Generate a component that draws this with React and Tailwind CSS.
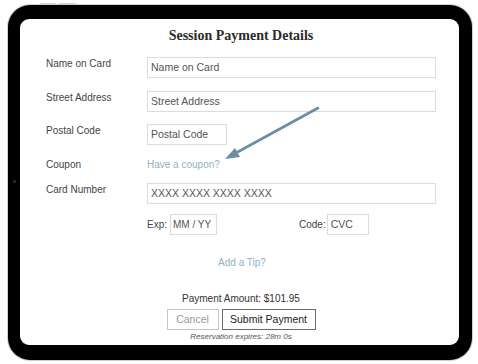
import React from 'react';

const sans = { fontFamily: '"Liberation Sans", Arial, sans-serif' };

function Field({ label, placeholder, width = 'flex-1', top = 'mt-[13px]' }) {
  return (
    <div className={`flex items-start ${top}`}>
      <div className="w-[101px] pt-[1px] text-[10px] leading-[12px] text-[#444]">{label}</div>
      <div className={`${width} h-[21px] border border-[#dcdcdc] px-[3px] flex items-center text-[10.5px] text-[#555] whitespace-nowrap`}>
        {placeholder}
      </div>
    </div>
  );
}

export default function App() {
  return (
    <div className="w-[478px] h-[364px] bg-white relative overflow-hidden" style={sans}>
      {/* side buttons on the tablet edge */}
      <div className="absolute left-[40px] top-[3px] w-[16px] h-[2px] bg-[#d4d4d4] rounded-sm" />
      <div className="absolute left-[58px] top-[3px] w-[18px] h-[2px] bg-[#d4d4d4] rounded-sm" />

      <div className="ml-[8px] mt-[5px] w-[464px] h-[355px] rounded-[22px] bg-black border-black border-l-[12px] border-t-[14px] border-r-[13px] border-b-[15px] shadow-[0_0_0_1px_#cfcfcf] relative">
        <div className="absolute -left-[7px] top-[161px] w-[3px] h-[3px] rounded-full bg-[#2a2a55]" />
        <div className="h-full bg-white rounded-[9px] relative pl-[26px] pr-[23px]">
          <h1
            className="pt-[7px] text-center text-[14px] leading-[20px] font-bold text-[#2b2b2b]"
            style={{ fontFamily: '"Liberation Serif", "Times New Roman", serif' }}
          >
            Session Payment Details
          </h1>

          <Field label="Name on Card" placeholder="Name on Card" top="mt-[11px]" />
          <Field label="Street Address" placeholder="Street Address" />
          <Field label="Postal Code" placeholder="Postal Code" width="w-[80px]" top="mt-[12px]" />

          <div className="flex mt-[14px] text-[10px] leading-[12px]">
            <div className="w-[101px] text-[#444]">Coupon</div>
            <div className="text-[#8fb2c8]">Have a coupon?</div>
          </div>

          <Field label="Card Number" placeholder="XXXX XXXX XXXX XXXX" top="mt-[12px]" />

          <div className="flex items-center mt-[10px] pl-[101px] text-[10px] text-[#444]">
            <span>Exp:</span>
            <div className="ml-[3px] w-[47px] h-[21px] border border-[#dcdcdc] px-[2px] flex items-center text-[10px] text-[#555] whitespace-nowrap">MM / YY</div>
            <span className="ml-[82px]">Code:</span>
            <div className="ml-[1px] w-[42px] h-[21px] border border-[#dcdcdc] px-[3px] flex items-center text-[10.5px] text-[#555]">CVC</div>
          </div>

          <div className="mt-[22px] text-center text-[10px] leading-[12px] text-[#8fb2c8] pl-[2px]">Add a Tip?</div>

          <div className="mt-[24px] text-center text-[10px] leading-[12px] text-[#333]">Payment Amount: $101.95</div>

          <div className="mt-[4px] flex justify-center gap-[3px]">
            <button className="w-[52px] h-[21px] border border-[#c4c4c4] text-[10.5px] text-[#9a9a9a]">Cancel</button>
            <button className="w-[94px] h-[21px] border border-[#6a6a6a] text-[10.5px] text-[#222]">Submit Payment</button>
          </div>

          <div className="mt-[2px] text-center text-[8px] leading-[10px] italic text-[#555]">Reservation expires: 28m 0s</div>

          {/* pointer arrow drawn over the form */}
          <svg className="absolute left-[200px] top-[85px]" width="110" height="70" viewBox="0 0 110 70">
            <line x1="98" y1="4" x2="14" y2="50" stroke="#6b8ea4" strokeWidth="2.6" strokeLinecap="round" />
            <polygon points="5,55 15,44 20,53" fill="#6b8ea4" />
          </svg>
        </div>
      </div>
    </div>
  );
}
